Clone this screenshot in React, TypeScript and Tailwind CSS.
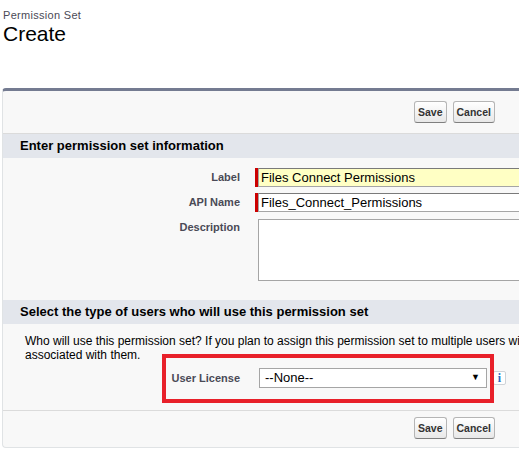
import React from 'react';

const Btn: React.FC<{ label: string }> = ({ label }) => (
  <button className="h-[22px] px-[3px] rounded-[3px] border border-[#b5b5b5] border-b-[#7f7f7f] bg-gradient-to-b from-[#ffffff] to-[#e8e8e8] text-[10.5px] font-bold text-[#333] leading-none">
    {label}
  </button>
);

const Buttons: React.FC<{ bottom?: boolean }> = ({ bottom }) => (
  <div
    className={
      'flex gap-[6px] pl-[411px] ' +
      (bottom ? 'pt-[6px] pb-[8px]' : 'pt-[10px] pb-[10px] border-b border-[#dbdbdb]')
    }
  >
    <Btn label="Save" />
    <Btn label="Cancel" />
  </div>
);

const SectionHeader: React.FC<{ title: string }> = ({ title }) => (
  <div className="bg-[#e3e6ec] h-[24px] flex items-center pl-[17px] text-[13px] font-bold text-black">
    {title}
  </div>
);

const FieldLabel: React.FC<{ text: string }> = ({ text }) => (
  <div className="w-[237px] text-right text-[11px] font-bold text-[#4a4a56] pt-[1px]">{text}</div>
);

export default function App() {
  return (
    <div className="w-[519px] h-[451px] overflow-hidden bg-white font-['Liberation_Sans',Arial,sans-serif]">
      {/* page title */}
      <div className="pl-[3px] pt-[9px]">
        <div className="text-[11px] leading-[13px] text-[#4a4a56] tracking-[0.3px]">Permission Set</div>
        <div className="text-[21px] leading-[24px] text-black">Create</div>
      </div>

      {/* main panel */}
      <div className="ml-[2px] mt-[42px] w-[640px] bg-[#f8f8f8] border-t-[3px] border-t-[#747b91] border-l border-l-[#e0e3e5] border-b border-b-[#e0e3e5] rounded-tl-[4px] rounded-bl-[4px]">
        <Buttons />

        <SectionHeader title="Enter permission set information" />

        <div className="pt-[10px] pb-[19px] flex flex-col gap-[6px]">
          <div className="flex items-start">
            <FieldLabel text="Label" />
            <div className="ml-[15px] w-[3px] h-[19px] bg-[#c00]" />
            <input
              readOnly
              value="Files Connect Permissions"
              className="w-[320px] h-[19px] px-[2px] bg-[#ffffc4] border border-[#a5a5a5] border-t-[#7a7a7a] text-[13px] text-black outline-none"
            />
          </div>
          <div className="flex items-start">
            <FieldLabel text="API Name" />
            <div className="ml-[15px] w-[3px] h-[19px] bg-[#c00]" />
            <input
              readOnly
              value="Files_Connect_Permissions"
              className="w-[320px] h-[19px] px-[2px] bg-white border border-[#a5a5a5] border-t-[#7a7a7a] text-[13px] text-black outline-none"
            />
          </div>
          <div className="flex items-start pt-[1px]">
            <div className="w-[237px] text-right text-[11px] font-bold text-[#4a4a56]">Description</div>
            <textarea
              readOnly
              className="ml-[18px] w-[320px] h-[62px] bg-white border border-[#a5a5a5] resize-none outline-none"
            />
          </div>
        </div>

        <SectionHeader title="Select the type of users who will use this permission set" />

        <div className="pl-[22px] pt-[10px] text-[12px] leading-[14px] text-black whitespace-nowrap">
          Who will use this permission set? If you plan to assign this permission set to multiple users with the same user license, choose the license that's
          <br />
          associated with them.
        </div>

        <div className="relative">
          <div className="flex items-start pt-[6px] pb-[22px]">
            <div className="w-[237px] text-right text-[11px] font-bold text-[#4a4a56] pt-[2px]">User License</div>
            <div className="ml-[19px] w-[228px] h-[20px] bg-white border border-[#a5a5a5] flex items-center justify-between pl-[5px] pr-[6px]">
              <span className="text-[13px] text-black">--None--</span>
              <span className="text-[9px] text-black">▼</span>
            </div>
            <div className="ml-[6px] mt-[3px] w-[13px] h-[14px] border border-[#cfd3d8] rounded-[2px] bg-white flex items-center justify-center text-[12px] font-bold font-['Liberation_Serif',serif] text-[#2a6bc4] leading-none">
              i
            </div>
          </div>
          {/* red annotation box */}
          <div className="absolute left-[159px] top-[-8px] w-[332px] h-[49px] border-[4px] border-[#e8202a]" />
        </div>

        <div className="border-t border-[#dbdbdb]" />
        <Buttons bottom />
      </div>
    </div>
  );
}
